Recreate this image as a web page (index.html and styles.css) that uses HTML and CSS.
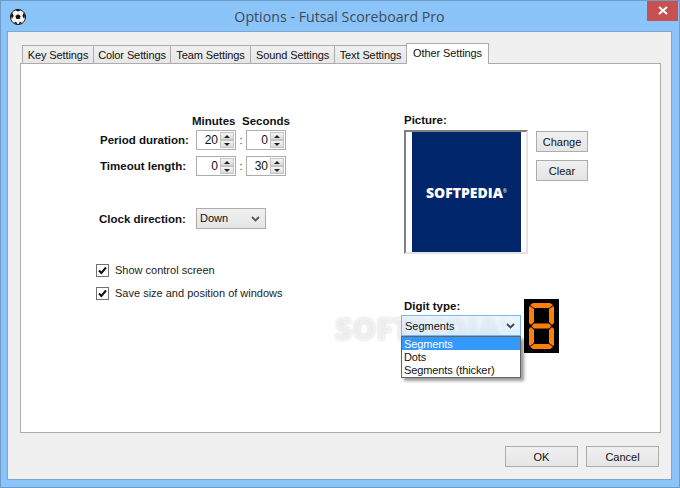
FILE: index.html
```html
<!DOCTYPE html>
<html lang="en">
<head>
<meta charset="utf-8">
<title>Options - Futsal Scoreboard Pro</title>
<link rel="stylesheet" href="styles.css">
</head>
<body>
<div class="window">
  <header class="titlebar">
    <svg class="app-icon" width="18" height="18" viewBox="0 0 18 18">
      <circle cx="9" cy="9" r="7.6" fill="#f4f4f4" stroke="#222" stroke-width="1"/>
      <polygon points="9,6.2 11.6,8 10.6,11 7.4,11 6.4,8" fill="#111"/>
      <path d="M6 1.9 L9 3.4 L12 1.9 L9 1.2Z M1.8 7 L3.6 5 L4.6 8 L2.8 11 Z M16.2 7 L14.4 5 L13.4 8 L15.2 11 Z M5 15 L7 13.4 L8.6 16.4 Z M13 15 L11 13.4 L9.4 16.4 Z" fill="#111"/>
    </svg>
    <span class="title">Options - Futsal Scoreboard Pro</span>
    <button class="close" aria-label="Close"><svg width="10" height="10" viewBox="0 0 10 10"><path d="M1 1 L9 8 M9 1 L1 8" stroke="#fff" stroke-width="2"/></svg></button>
  </header>
  <main class="client">
    <nav class="tabs">
      <span class="tab t1">Key Settings</span>
      <span class="tab t2">Color Settings</span>
      <span class="tab t3">Team Settings</span>
      <span class="tab t4">Sound Settings</span>
      <span class="tab t5">Text Settings</span>
      <span class="tab active">Other Settings</span>
    </nav>
    <section class="panel">
      <div class="left">
        <div class="time-grid">
          <span></span>
          <b class="head">Minutes</b>
          <span></span>
          <b class="head">Seconds</b>

          <b class="label">Period duration:</b>
          <div class="spin"><span class="val">20</span><span class="arrows"><i class="up"></i><i class="down"></i></span></div>
          <span class="colon">:</span>
          <div class="spin"><span class="val">0</span><span class="arrows"><i class="up"></i><i class="down"></i></span></div>

          <b class="label">Timeout length:</b>
          <div class="spin"><span class="val">0</span><span class="arrows"><i class="up"></i><i class="down"></i></span></div>
          <span class="colon">:</span>
          <div class="spin"><span class="val">30</span><span class="arrows"><i class="up"></i><i class="down"></i></span></div>
        </div>
        <div class="clock">
          <b class="label">Clock direction:</b>
          <div class="select">Down<svg class="chev" width="9" height="6" viewBox="0 0 9 6"><path d="M1 1 L4.5 4.500 L8 1" fill="none" stroke="#555" stroke-width="1.8"/></svg></div>
        </div>
        <div class="checks">
          <label class="check"><svg class="box" width="13" height="13" viewBox="0 0 13 13"><rect x=".5" y=".5" width="12" height="12" fill="#fff" stroke="#707070"/><path d="M3 6.5 L5.4 9 L10 3.5" fill="none" stroke="#111" stroke-width="2"/></svg>Show control screen</label>
          <label class="check"><svg class="box" width="13" height="13" viewBox="0 0 13 13"><rect x=".5" y=".5" width="12" height="12" fill="#fff" stroke="#707070"/><path d="M3 6.5 L5.4 9 L10 3.5" fill="none" stroke="#111" stroke-width="2"/></svg>Save size and position of windows</label>
        </div>
      </div>
      <div class="right">
        <b class="pic-label">Picture:</b>
        <div class="pic-row">
          <div class="picture"><div class="logo"><span>SOFTPEDIA<sup>®</sup></span></div></div>
          <div class="pic-buttons">
            <button class="btn small">Change</button>
            <button class="btn small">Clear</button>
          </div>
        </div>
        <div class="digit-row">
          <div class="digit-col">
            <b class="digit-label">Digit type:</b>
            <div class="combo">Segments<svg class="chev" width="9" height="6" viewBox="0 0 9 6"><path d="M1 1 L4.5 4.500 L8 1" fill="none" stroke="#444" stroke-width="1.8"/></svg></div>
            <ul class="droplist">
              <li class="selected">Segments</li>
              <li>Dots</li>
              <li>Segments (thicker)</li>
            </ul>
          </div>
          <svg class="digit" width="35" height="54" viewBox="0 0 35 54">
            <rect width="35" height="54" fill="#000"/>
            <g fill="#ff7f0a">
              <polygon points="9,4 26,4 29,6 25,9 10,9 6,6"/>
              <polygon points="5,8 6,7 10,10 10,23 7,26 5,24"/>
              <polygon points="30,8 29,7 25,10 25,23 28,26 30,24"/>
              <polygon points="10,24.500 25,24.500 27.500,27 25,29.500 10,29.500 7.500,27"/>
              <polygon points="5,30 7,28 10,31 10,44 6,47 5,46"/>
              <polygon points="30,30 28,28 25,31 25,44 29,47 30,46"/>
              <polygon points="10,45 25,45 29,48 26,50 9,50 6,48"/>
            </g>
          </svg>
        </div>
      </div>
      <div class="watermark">SOFTPEDIA<sup>®</sup></div>
    </section>
    <footer class="actions">
      <button class="btn wide">OK</button>
      <button class="btn wide">Cancel</button>
    </footer>
  </main>
</div>
</body>
</html>
```
FILE: styles.css
```css
* { box-sizing: border-box; }
html, body { margin: 0; padding: 0; }
body {
  width: 680px;
  height: 488px;
  overflow: hidden;
  font-family: "Liberation Sans", Arial, sans-serif;
  font-size: 11px;
  color: #111;
}
b { font-size: 11.5px; }
.window {
  width: 680px;
  height: 488px;
  background: #8ac4f8;
  border: 1px solid #6d9cc9;
  display: flex;
  flex-direction: column;
  padding: 0 7px 7px 6px;
}
.titlebar {
  height: 30px;
  flex: none;
  display: flex;
  align-items: center;
  position: relative;
}
.app-icon { margin: 1px 0 0 2px; }
.title {
  position: absolute;
  left: 0;
  right: 0;
  top: 6px;
  text-align: center;
  font-size: 14.2px;
  line-height: 20px;
  color: #3e4a57;
  font-family: "Open Sans", sans-serif;
}
.close {
  position: absolute;
  right: -6px;
  top: 0;
  width: 31px;
  height: 20px;
  border: 0;
  padding: 0;
  background: #c75050;
  display: flex;
  align-items: center;
  justify-content: center;
}
.client {
  flex: 1;
  background: #f0f0f0;
  border: 1px solid #7fa6cf;
  display: flex;
  flex-direction: column;
  padding: 12px 10px 0 12px;
}
.tabs {
  height: 20px;
  flex: none;
  display: flex;
  align-items: flex-end;
  padding-left: 2px;
  position: relative;
  z-index: 1;
  margin-bottom: -1px;
}
.tab {
  height: 19px;
  border: 1px solid #acacac;
  border-right: 0;
  background: linear-gradient(#f0f0f0, #e6e6e6);
  text-align: center;
  line-height: 18px;
  white-space: nowrap;
  letter-spacing: -.1px;
}
.t1 { width: 71px; }
.t2 { width: 77px; }
.t3 { width: 80px; }
.t4 { width: 84px; }
.t5 { width: 72px; }
.active {
  width: 83px;
  height: 21px;
  background: #fff;
  border-right: 1px solid #acacac;
  border-bottom: 0;
  line-height: 18px;
}
.panel {
  height: 370px;
  flex: none;
  background: #fff;
  border: 1px solid #acacac;
  display: flex;
  position: relative;
  padding: 50px 0 0 78px;
}
.left { width: 305px; flex: none; }
.time-grid {
  display: grid;
  grid-template-columns: 97px 40px 10px 40px;
  grid-template-rows: 16px 20px 26px;
}
.head {
  text-align: center;
  line-height: 14px;
  white-space: nowrap;
  margin: 0 4px 0 -4px;
}
.label { line-height: 20px; white-space: nowrap; padding-left: 1px; }
.time-grid > :nth-child(n+9) { margin-top: 6px; }
.colon { text-align: center; line-height: 20px; color: #444; }
.spin {
  height: 20px;
  border: 1px solid #acacac;
  background: #fff;
  display: flex;
  justify-content: flex-end;
  padding: 1px;
  font-size: 12px;
}
.val { line-height: 16px; padding-right: 1px; }
.arrows {
  width: 14px;
  flex: none;
  display: flex;
  flex-direction: column;
  margin-left: 1px;
}
.arrows i {
  flex: 1;
  background: linear-gradient(#f4f4f4, #dcdcdc);
  border: 1px solid #c4c4c4;
  position: relative;
}
.arrows i::after {
  content: "";
  position: absolute;
  left: 3px;
  border-left: 3px solid transparent;
  border-right: 3px solid transparent;
}
.up::after { top: 2px; border-bottom: 3px solid #222; }
.down::after { top: 2px; border-top: 3px solid #222; }
.clock {
  margin-top: 32px;
  display: flex;
  align-items: center;
  height: 21px;
}
.clock .label { width: 97px; padding-left: 0; }
.select {
  width: 70px;
  height: 21px;
  border: 1px solid #acacac;
  background: linear-gradient(#f0f0f0, #e5e5e5);
  padding-left: 3px;
  line-height: 18px;
  position: relative;
}
.chev { position: absolute; right: 5px; top: 7px; }
.checks {
  margin-top: 33px;
  display: flex;
  flex-direction: column;
  gap: 7px;
}
.check {
  height: 16px;
  display: flex;
  align-items: center;
  gap: 6px;
  margin-left: -1px;
  line-height: 16px;
  color: #222;
  white-space: nowrap;
}
.box { margin-left: -2px; margin-top: 1px; }
.right { width: 190px; flex: none; position: relative; }
.pic-label { display: block; height: 16px; line-height: 13px; }
.pic-row { display: flex; }
.picture {
  width: 124px;
  height: 124px;
  border: 2px solid #e3e3e3;
  border-top-color: #808080;
  border-left-color: #808080;
  padding-left: 6px;
  background: #fff;
}
.logo {
  width: 109px;
  height: 120px;
  background: #00256a;
  display: flex;
  align-items: center;
  justify-content: center;
  color: #fff;
  font-weight: 800;
  font-size: 14px;
  font-family: "Open Sans", sans-serif;
}
.logo sup { font-size: 5px; font-weight: 400; vertical-align: 5px; line-height: 0; }
.pic-buttons {
  display: flex;
  flex-direction: column;
  gap: 8px;
  margin: 1px 0 0 8px;
}
.btn {
  font: inherit;
  color: #111;
  border: 1px solid #acacac;
  background: linear-gradient(#f0f0f0, #e5e5e5);
  padding: 0;
}
.small { width: 52px; height: 21px; }
.digit-row { display: flex; margin-top: 45px; }
.digit-col { width: 120px; position: relative; }
.digit-label { display: block; height: 16px; line-height: 14px; }
.combo {
  width: 120px;
  height: 21px;
  margin-left: -3px;
  border: 1px solid #7eb4ea;
  background: linear-gradient(rgba(222, 238, 252, .55), rgba(205, 228, 250, .6));
  padding-left: 3px;
  line-height: 20px;
  position: relative;
  z-index: 2;
}
.droplist {
  position: absolute;
  left: -3px;
  top: 37px;
  width: 120px;
  height: 42px;
  margin: 0;
  padding: 0;
  list-style: none;
  background: #fff;
  border: 1px solid #646464;
  box-shadow: 3px 3px 3px rgba(0, 0, 0, .4);
  z-index: 2;
  letter-spacing: -.1px;
}
.droplist li { height: 13px; line-height: 14px; padding-left: 2px; white-space: nowrap; }
.droplist .selected { background: #3399ff; color: #fff; }
.watermark {
  position: absolute;
  left: 314px;
  top: 249px;
  font-family: "Open Sans", sans-serif;
  font-weight: 800;
  font-size: 30px;
  line-height: 32px;
  color: rgba(255, 255, 255, .6);
  text-shadow: 0 0 3px rgba(0, 0, 0, .18);
  z-index: 1;
  pointer-events: none;
}
.watermark sup { font-size: 9px; font-weight: 400; vertical-align: 14px; line-height: 0; }
.actions {
  display: flex;
  justify-content: flex-end;
  gap: 8px;
  padding: 13px 2px 0 0;
}
.wide { width: 73px; height: 21px; }
```
